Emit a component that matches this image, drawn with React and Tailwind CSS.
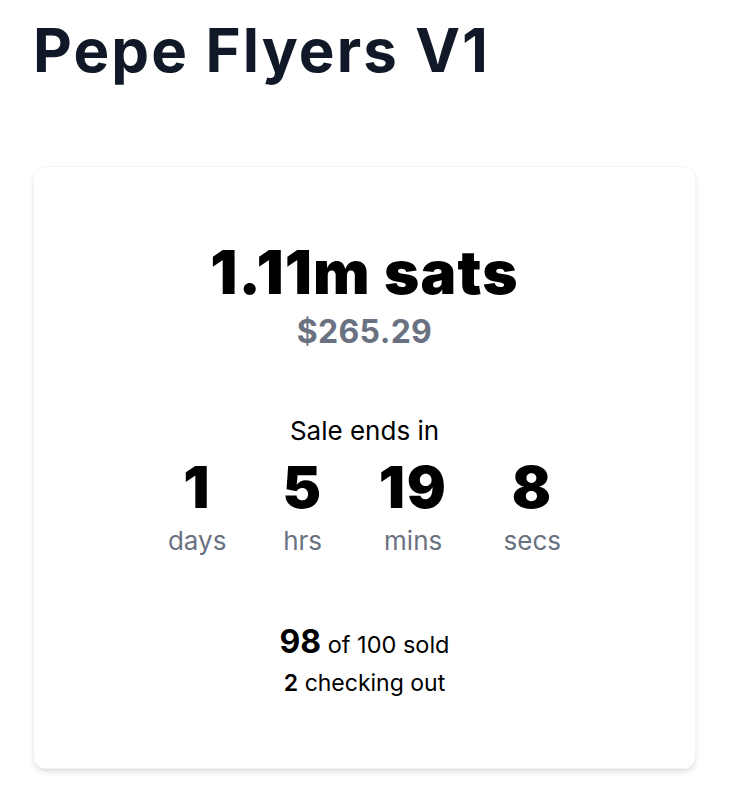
export default function App() {
  const units = [
    { v: "1", l: "days" },
    { v: "5", l: "hrs" },
    { v: "19", l: "mins" },
    { v: "8", l: "secs" },
  ];
  return (
    <div className="min-h-screen bg-white" style={{ fontFamily: "Inter, 'Noto Sans', sans-serif" }}>
      <div className="px-[33px] pt-[14px]">
        <h1 className="text-[60px] leading-[72px] font-bold tracking-[0.035em] text-[#111827]">Pepe Flyers V1</h1>
        <div className="mt-[80px] w-[663px] h-[603px] rounded-xl border border-gray-100 bg-white shadow-md flex flex-col items-center pt-[69px]">
          <div className="text-[60px] leading-[72px] font-black tracking-[0.02em] text-black">1.11m sats</div>
          <div className="mt-[6px] text-[32px] leading-[36px] font-bold tracking-[0.01em] text-gray-500">$265.29</div>
          <div className="mt-[64px] text-[26px] leading-[34px] text-black">Sale ends in</div>
          <div className="flex gap-14 mt-[7px]">
            {units.map((u) => (
              <div key={u.l} className="flex flex-col items-center">
                <div className="text-[58px] leading-[64px] font-black tracking-[0.03em] text-black">{u.v}</div>
                <div className="mt-[6px] text-[26px] leading-[32px] text-gray-500">{u.l}</div>
              </div>
            ))}
          </div>
          <div className="mt-[65px] text-black leading-[40px]">
            <span className="text-[32px] font-bold">98</span>
            <span className="text-[23.5px]"> of 100 sold</span>
          </div>
          <div className="mt-[0px] text-black text-[23px] leading-[32px]">
            <span className="font-semibold">2</span> checking out
          </div>
        </div>
      </div>
    </div>
  );
}
